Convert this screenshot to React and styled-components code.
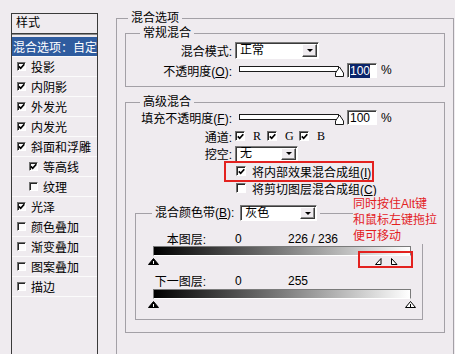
import React from 'react'
import styled, { createGlobalStyle } from 'styled-components'

const GlobalStyle = createGlobalStyle`
  html, body {
    margin: 0;
    padding: 0;
    background: #efebef;
  }
  body {
    font-family: "Liberation Sans", "Noto Sans CJK SC", sans-serif;
    font-size: 12px;
    color: #000;
  }
`

const Page = styled.div`
  position: relative;
  display: flex;
  align-items: flex-start;
  width: 455px;
  height: 354px;
  overflow: hidden;
  background: #efebef;
`

/* ---------- left style list ---------- */

const Sidebar = styled.div`
  flex: none;
  width: 85px;
  height: 360px;
  margin: 13px 0 0 11px;
  border: 1px solid #3a3a3a;
`

const SideHeader = styled.div`
  height: 19px;
  line-height: 19px;
  padding-left: 4px;
  border-bottom: 1px solid #3a3a3a;
  box-shadow: 0 1px 0 #8c8c8c;
  margin-bottom: 3px;
`

const SideItem = styled.div`
  display: flex;
  align-items: center;
  gap: 5px;
  height: 20px;
  box-sizing: border-box;
  padding-left: ${p => (p.$active ? 1 : p.$indent ? 17 : 5)}px;
  border-bottom: 1px solid #fbfbfb;
  background: ${p => (p.$active ? '#2f5c9f' : 'transparent')};
  color: ${p => (p.$active ? '#fff' : '#000')};
  white-space: nowrap;
  overflow: hidden;
`

/* ---------- common controls ---------- */

const Box = styled.span`
  flex: none;
  display: flex;
  align-items: center;
  justify-content: center;
  width: ${p => p.$size}px;
  height: ${p => p.$size}px;
  box-sizing: border-box;
  background: ${p => p.$bg};
  border-top: 1px solid #6f6f6f;
  border-left: 1px solid #6f6f6f;
  border-bottom: 1px solid #fff;
  border-right: 1px solid #fff;
  box-shadow: inset 1px 1px 0 #262626;
`

const Check = ({ on, size = 10, bg = '#fff' }) => (
  <Box $size={size} $bg={bg}>
    {on && (
      <svg width="7" height="7" viewBox="0 0 7 7">
        <path d="M0.8 3.3 L2.7 5.3 L6.3 1.2" fill="none" stroke="#000" strokeWidth="1.7" />
      </svg>
    )}
  </Box>
)

const U = styled.span`
  text-decoration: underline;
`

const Group = styled.fieldset`
  margin: ${p => p.$margin || '0'};
  padding: 0;
  min-width: 0;
  width: ${p => p.$width}px;
  box-sizing: border-box;
  border: 1px solid #a3a0a6;
  min-height: ${p => p.$minHeight || 0}px;
`

const Legend = styled.legend`
  margin-left: ${p => p.$offset}px;
  padding: 0 3px;
  line-height: 14px;
  white-space: nowrap;
`

const GroupBody = styled.div`
  padding: ${p => p.$pad};
`

const Form = styled.div`
  display: grid;
  grid-template-columns: 106px auto;
  grid-template-rows: ${p => p.$rows};
  column-gap: 3px;
  row-gap: ${p => p.$gap}px;
  align-items: center;
  justify-items: start;
  padding: ${p => p.$top}px 0 ${p => p.$bottom || 0}px;
`

const Label = styled.span`
  justify-self: end;
  white-space: nowrap;
`

const Controls = styled.div`
  display: flex;
  align-items: center;
  gap: ${p => p.$gap ?? 4}px;
  height: 100%;
`

const SelectBox = styled.div`
  display: flex;
  align-items: center;
  justify-content: space-between;
  width: ${p => p.$width}px;
  height: ${p => p.$height || 17}px;
  box-sizing: border-box;
  background: #fff;
  border-top: 1px solid #7a7a7a;
  border-left: 1px solid #7a7a7a;
  border-bottom: 1px solid #fff;
  border-right: 1px solid #fff;
  box-shadow: inset 1px 1px 0 #3a3a3a;
  padding: 1px 1px 1px 4px;
  line-height: 13px;
`

const DropBtn = styled.span`
  display: flex;
  align-items: center;
  justify-content: center;
  width: 15px;
  height: 100%;
  box-sizing: border-box;
  background: #efebef;
  border-top: 1px solid #fff;
  border-left: 1px solid #fff;
  border-bottom: 1px solid #3a3a3a;
  border-right: 1px solid #3a3a3a;
  box-shadow: inset -1px -1px 0 #8a8a8a;

  &::after {
    content: '';
    border-left: 3px solid transparent;
    border-right: 3px solid transparent;
    border-top: 3px solid #000;
  }
`

const Select = ({ value, width, height }) => (
  <SelectBox $width={width} $height={height}>
    <span>{value}</span>
    <DropBtn />
  </SelectBox>
)

const SliderWrap = styled.div`
  position: relative;
  flex: none;
  width: 108px;
  height: 16px;
`

const Track = styled.div`
  margin: 4px 4px 0;
  height: 6px;
  box-sizing: border-box;
  background: #fff;
  border: 1px solid #1a1a1a;
`

const Thumb = styled.svg`
  position: absolute;
  left: 100px;
  top: 4px;
`

const Slider = () => (
  <SliderWrap>
    <Track />
    <Thumb width="9" height="11" viewBox="0 0 9 11">
      <path d="M0.5 10.5 V7 L4.5 1 L8.5 7 V10.5 Z" fill="#fff" stroke="#1a1a1a" />
    </Thumb>
  </SliderWrap>
)

const NumInput = styled.div`
  flex: none;
  width: 30px;
  height: 15px;
  box-sizing: border-box;
  background: #fff;
  border-top: 1px solid #7a7a7a;
  border-left: 1px solid #7a7a7a;
  border-bottom: 1px solid #fff;
  border-right: 1px solid #fff;
  box-shadow: inset 1px 1px 0 #3a3a3a;
  padding: 1px 0 0 2px;
  line-height: 12px;
`

const Picked = styled.span`
  background: #0a246a;
  color: #fff;
`

const Channel = styled.label`
  display: flex;
  align-items: center;
  gap: 8px;
  width: 32px;
  font-family: "Liberation Serif", serif;
  font-size: 12px;
`

const CheckRow = styled.div`
  grid-column: 2;
  position: relative;
  display: flex;
  align-items: center;
  gap: 6px;
  padding-left: 1px;
  white-space: nowrap;

  ${p => p.$marked && `
    &::after {
      content: '';
      position: absolute;
      inset: -2px -3px -2px -11px;
      border: 2px solid #e3211f;
    }
  `}
`

/* ---------- blend band ---------- */

const BandLegend = styled.span`
  display: inline-flex;
  align-items: center;
  gap: 6px;
  height: 16px;
`

const BandBody = styled.div`
  padding: 9px 0 10px;
`

const Values = styled.div`
  display: grid;
  grid-template-columns: 70px 82px auto;
  height: 14px;
  align-items: center;
  margin-top: ${p => p.$top}px;
`

const ValueCell = styled.span`
  padding-left: ${p => p.$pad || 0}px;
  text-align: ${p => (p.$right ? 'right' : 'left')};
  white-space: nowrap;
`

const Bar = styled.div`
  margin: ${p => p.$top}px 0 0 17px;
  width: 258px;
  height: 10px;
  box-sizing: border-box;
  border-top: 1px solid #7a7a7a;
  border-left: 1px solid #7a7a7a;
  border-bottom: 1px solid #fff;
  border-right: 1px solid #7a7a7a;
  background: linear-gradient(to right, #000 0%, #7c7c7c 50%, #fff 100%);
`

const Markers = styled.div`
  position: relative;
  margin: 2px 0 0 17px;
  width: 258px;
  height: 8px;
`

const Marker = styled.svg`
  position: absolute;
  top: 0;
`

const MarkBox = styled.div`
  position: absolute;
  left: 205px;
  top: -7px;
  width: 55px;
  height: 17px;
  box-sizing: border-box;
  border: 2px solid #e3211f;
`

const Note = styled.div`
  position: absolute;
  left: 353px;
  top: 196px;
  padding-right: 2px;
  background: #efebef;
  color: #e3211f;
  font-size: 12px;
  line-height: 16px;
`

const pos = v => (v / 255) * 257

const Tri = ({ v, dark }) => (
  <Marker width="11" height="7" viewBox="0 0 11 7" style={{ left: pos(v) - 5 }}>
    <path d="M5.5 0.5 L10.5 6.5 H0.5 Z" fill={dark ? '#000' : '#fff'} stroke="#000" />
    <path d="M5.5 3 V6" stroke={dark ? '#fff' : '#000'} />
  </Marker>
)

const HalfTri = ({ v, side }) => (
  <Marker width="7" height="7" viewBox="0 0 7 7" style={{ left: side === 'left' ? pos(v) - 6 : pos(v) }}>
    {side === 'left'
      ? <path d="M6 0.5 V6.5 H0.5 Z" fill="#fff" stroke="#000" />
      : <path d="M0.5 0.5 L6 6.5 H0.5 Z" fill="#fff" stroke="#000" />}
  </Marker>
)

const styles = [
  { name: '投影', on: true },
  { name: '内阴影', on: true },
  { name: '外发光', on: true },
  { name: '内发光', on: true },
  { name: '斜面和浮雕', on: true },
  { name: '等高线', on: true, indent: true },
  { name: '纹理', on: false, indent: true },
  { name: '光泽', on: true },
  { name: '颜色叠加', on: false },
  { name: '渐变叠加', on: false },
  { name: '图案叠加', on: false },
  { name: '描边', on: false },
]

const App = () => {
  return (
    <Page>
      <GlobalStyle />
      <Sidebar>
        <SideHeader>样式</SideHeader>
        <SideItem $active>混合选项：自定</SideItem>
        {styles.map(s => (
          <SideItem key={s.name} $indent={s.indent}>
            <Check on={s.on} size={9} bg="#fbfafb" />
            <span>{s.name}</span>
          </SideItem>
        ))}
      </Sidebar>

      <Group $margin="11px 0 0 18px" $width={338} $minHeight={380}>
        <Legend $offset={11}>混合选项</Legend>
        <GroupBody $pad="1px 8px 0">
          <Group $width={320}>
            <Legend $offset={14}>常规混合</Legend>
            <Form $rows="17px 16px" $gap={3} $top={2} $bottom={8}>
              <Label>混合模式:</Label>
              <Controls>
                <Select value="正常" width={84} />
              </Controls>
              <Label>不透明度(<U>O</U>):</Label>
              <Controls>
                <Slider />
                <NumInput><Picked>100</Picked></NumInput>
                <span>%</span>
              </Controls>
            </Form>
          </Group>

          <Group $width={320} $margin="8px 0 0">
            <Legend $offset={14}>高级混合</Legend>
            <Form $rows="17px 14px 15px 14px 14px" $gap={3} $top={0}>
              <Label>填充不透明度(<U>F</U>):</Label>
              <Controls>
                <Slider />
                <NumInput>100</NumInput>
                <span>%</span>
              </Controls>
              <Label>通道:</Label>
              <Controls $gap={0}>
                {['R', 'G', 'B'].map(c => (
                  <Channel key={c}>
                    <Check on />
                    <span>{c}</span>
                  </Channel>
                ))}
              </Controls>
              <Label>挖空:</Label>
              <Controls>
                <Select value="无" width={63} height={16} />
              </Controls>
              <CheckRow $marked>
                <Check on />
                <span>将内部效果混合成组(<U>I</U>)</span>
              </CheckRow>
              <CheckRow>
                <Check />
                <span>将剪切图层混合成组(<U>C</U>)</span>
              </CheckRow>
            </Form>

            <GroupBody $pad="0 0 12px 9px">
              <Group $width={288} $margin="10px 0 0">
                <Legend $offset={16}>
                  <BandLegend>
                    <span>混合颜色带(<U>B</U>):</span>
                    <Select value="灰色" width={77} height={16} />
                  </BandLegend>
                </Legend>
                <BandBody>
                  <Values $top={0}>
                    <ValueCell $right>本图层:</ValueCell>
                    <ValueCell $pad={29}>0</ValueCell>
                    <ValueCell>226 / 236</ValueCell>
                  </Values>
                  <Bar $top={2} />
                  <Markers>
                    <Tri v={0} dark />
                    <HalfTri v={226} side="left" />
                    <HalfTri v={236} side="right" />
                    <MarkBox />
                  </Markers>
                  <Values $top={6}>
                    <ValueCell $right>下一图层:</ValueCell>
                    <ValueCell $pad={29}>0</ValueCell>
                    <ValueCell>255</ValueCell>
                  </Values>
                  <Bar $top={3} />
                  <Markers>
                    <Tri v={0} dark />
                    <Tri v={255} />
                  </Markers>
                </BandBody>
              </Group>
            </GroupBody>
          </Group>
        </GroupBody>
      </Group>

      <Note>
        同时按住Alt键<br />
        和鼠标左键拖拉<br />
        便可移动
      </Note>
    </Page>
  )
}

export default App
